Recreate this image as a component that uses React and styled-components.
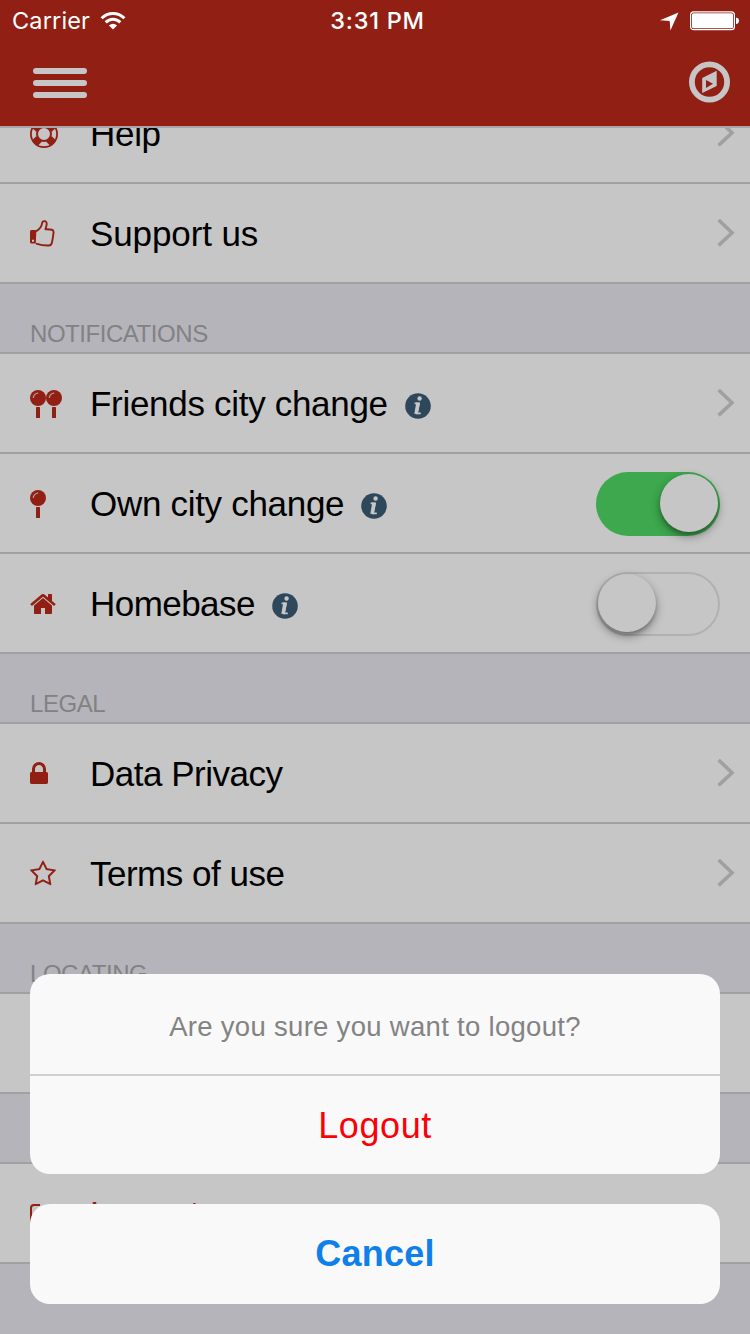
import React from "react";
import styled, { createGlobalStyle } from "styled-components";

const red = "#921f13";
const line = "#a1a1a2";
const surface = "#c6c6c6";
const backdrop = "#b5b4bb";

const GlobalStyle = createGlobalStyle`
  * { box-sizing: border-box; }
  body { margin: 0; background: ${backdrop}; }
  button { font: inherit; border: 0; padding: 0; background: none; }
  svg { display: block; flex: none; }
`;

const Screen = styled.div`
  position: relative;
  display: flex;
  flex-direction: column;
  width: 750px;
  height: 1334px;
  overflow: hidden;
  background: ${backdrop};
  font-family: "Liberation Sans", Arial, sans-serif;
  color: #000;
`;

const Header = styled.header`
  flex: none;
  height: 128px;
  background: ${red};
  border-bottom: 2px solid #a9a7a9;
`;

const StatusBar = styled.div`
  display: grid;
  grid-template-columns: 1fr auto 1fr;
  align-items: center;
  height: 40px;
  padding: 1px 11px 0 12px;
  color: #fff;
  font-family: Inter, "Liberation Sans", sans-serif;
  font-size: 24px;
  line-height: 40px;
`;

const StatusGroup = styled.div`
  display: flex;
  align-items: center;
  gap: ${(p) => p.$gap}px;
  justify-content: ${(p) => (p.$end ? "flex-end" : "flex-start")};
`;

const Carrier = styled.span`
  font-size: 23.5px;
  letter-spacing: 0.15px;
`;

const Clock = styled.span`
  margin-left: 4px;
  font-weight: 500;
  font-size: 23.5px;
  letter-spacing: 0.75px;
`;

const NavBar = styled.nav`
  display: flex;
  align-items: center;
  justify-content: space-between;
  height: 84px;
  padding: 0 20px 0 33px;
`;

const MenuButton = styled.button`
  display: flex;
  flex-direction: column;
  gap: 6px;
  width: 54px;
  margin-top: 2px;
`;

const MenuBar = styled.span`
  height: 6px;
  border-radius: 3px;
  background: ${surface};
`;

const Content = styled.main`
  flex: 1;
  min-height: 0;
  overflow: hidden;
`;

const List = styled.div`
  margin-top: -44px;
`;

const SectionTitle = styled.h2`
  display: flex;
  align-items: flex-end;
  height: 70px;
  margin: 0;
  padding: 0 30px 5px;
  border-bottom: 2px solid ${line};
  color: #828283;
  font-size: 24px;
  font-weight: 400;
  line-height: 27px;
  letter-spacing: -0.45px;
`;

const Row = styled.div`
  display: flex;
  align-items: center;
  height: 100px;
  padding: 0 ${(p) => (p.$toggle ? 30 : 15)}px 0 30px;
  background: ${surface};
  border-bottom: 2px solid ${line};
`;

const IconSlot = styled.span`
  display: flex;
  align-items: center;
  width: 60px;
  height: 40px;
  margin-top: 2px;
  color: ${red};
`;

const Label = styled.span`
  margin-top: 2px;
  color: ${(p) => p.$color ?? "#000"};
  font-size: 35px;
  line-height: 42px;
  white-space: nowrap;
  letter-spacing: ${(p) => p.$spacing ?? 0}px;
`;

const InfoSlot = styled.span`
  margin: 5px 0 0 17px;
`;

const Trailing = styled.span`
  margin-left: auto;
`;

const Gap = styled.div`
  height: 70px;
  border-bottom: 2px solid ${line};
`;

const SwitchTrack = styled.button`
  display: flex;
  justify-content: ${(p) => (p.$on ? "flex-end" : "flex-start")};
  width: 124px;
  height: 64px;
  margin-top: 2px;
  padding: ${(p) => (p.$on ? 2 : 0)}px;
  border: ${(p) => (p.$on ? "0" : "2px solid #b1b1b1")};
  border-radius: 32px;
  background: ${(p) => (p.$on ? "#3da84d" : surface)};
`;

const SwitchKnob = styled.span`
  width: 58px;
  height: 58px;
  border-radius: 50%;
  background: ${surface};
  box-shadow: 0 4px 10px rgba(0, 0, 0, 0.4), 0 3px 3px rgba(0, 0, 0, 0.12);
`;

const Sheet = styled.div`
  position: absolute;
  left: 30px;
  right: 30px;
  bottom: 30px;
  display: flex;
  flex-direction: column;
  gap: 30px;
`;

const SheetGroup = styled.div`
  display: flex;
  flex-direction: column;
  overflow: hidden;
  border-radius: 20px;
  background: #f9f9f9;
`;

const SheetTitle = styled.p`
  display: flex;
  align-items: center;
  justify-content: center;
  height: 102px;
  margin: 0;
  padding-top: 5px;
  border-bottom: 2px solid #d0d0d1;
  color: #838383;
  font-size: 27.5px;
  letter-spacing: 0.3px;
`;

const SheetButton = styled.button`
  height: ${(p) => (p.$cancel ? 100 : 98)}px;
  padding-top: ${(p) => (p.$cancel ? 0 : 2)}px;
  color: ${(p) => (p.$cancel ? "#0f80ea" : "#fb0007")};
  font-size: 36px;
  font-weight: ${(p) => (p.$cancel ? 700 : 400)};
  letter-spacing: ${(p) => (p.$cancel ? 0.2 : 0.6)}px;
`;

const WifiIcon = () => (
  <svg width="26" height="20" viewBox="0 0 26 20" fill="none" stroke="#fff" strokeWidth="3">
    <path d="M1.6 7.3C8 .9 18 .9 24.4 7.3" />
    <path d="M5.7 11.4C9.9 7.2 16.1 7.2 20.3 11.4" />
    <path d="M13 18.6 8.9 14.5Q13 11 17.1 14.5Z" fill="#fff" stroke="none" />
  </svg>
);

const LocationIcon = () => (
  <svg width="19" height="19" viewBox="0 0 19 19" fill="#fff">
    <path d="M18.5.4 0 8.2l9.7.9.7 9.4Z" />
  </svg>
);

const BatteryIcon = () => (
  <svg width="49" height="20" viewBox="0 0 49 20">
    <rect x=".6" y=".9" width="43.8" height="17.8" rx="3" fill="none" stroke="#fff" strokeWidth="1.2" />
    <rect x="2" y="2.3" width="41" height="15" rx="1.6" fill="#fff" />
    <path d="M46 6.5q3 .5 3 3.3T46 13.1Z" fill="#fff" />
  </svg>
);

const CompassIcon = () => (
  <svg width="41" height="42" viewBox="0 0 41 42">
    <circle cx="20.5" cy="21" r="17.6" fill="none" stroke={surface} strokeWidth="5.8" />
    <path fill={surface} fillRule="evenodd" d="M13.2 17 27.7 9.8V25L13.2 32ZM17 19V27L24 22.8Z" />
  </svg>
);

const LifeRingIcon = () => (
  <svg width="28" height="28" viewBox="0 0 28 28" fill="none" stroke="currentColor">
    <circle cx="14" cy="14" r="13.1" strokeWidth="1.8" />
    <circle cx="14" cy="14" r="7" strokeWidth="2" />
    <g strokeWidth="8">
      <path d="m5 5 4 4M19 19l4 4M23 5l-4 4M9 19l-4 4" />
    </g>
  </svg>
);

const ThumbIcon = () => (
  <svg width="25" height="28" viewBox="0 0 25 28" fill="none">
    <path d="M6 11.4C9.5 9.2 11.5 7.5 12 3.6 12.4 1.2 13.8.9 15.1 1.2c2.4.7 1.8 3.8.3 8 1.7.1 4.2.1 6.5.5 1.6.3 1.8 1.4 1.6 3.1-.3 2.8-.9 7-1.6 9.9-.5 2-1.5 2.8-3.2 2.8-4.7.1-8.5-.6-12.7-1.9" stroke="currentColor" strokeWidth="1.9" strokeLinejoin="round" />
    <path fill="currentColor" fillRule="evenodd" d="M1.5 10H5q1.6 0 1.3 1.6L5.8 23.5H1.5Q0 23.5 0 22V11.5Q0 10 1.5 10ZM2 19.7v2h2v-2Z" />
  </svg>
);

const Pin = ({ x }) => (
  <g transform={`translate(${x} 0)`}>
    <circle cx="8" cy="8" r="8" fill="currentColor" />
    <path d="M3.3 7.5Q4 3.8 7.8 3" fill="none" stroke={surface} strokeWidth="1.2" strokeLinecap="round" opacity=".85" />
    <rect x="6" y="17" width="4" height="11" rx=".5" fill="currentColor" />
  </g>
);

const PinIcon = ({ count = 1 }) => (
  <svg width={16 * count} height="28" viewBox={`0 0 ${16 * count} 28`}>
    <Pin x={0} />
    {count > 1 && <Pin x={16} />}
  </svg>
);

const HomeIcon = () => (
  <svg width="26" height="28" viewBox="64 0 1664 1792" fill="currentColor">
    <path d="M1472 992v480q0 26-19 45t-45 19h-384v-384h-256v384h-384q-26 0-45-19t-19-45v-480q0-1 .5-3t.5-3l575-474 575 474q1 2 1 6zm223-69l-62 74q-8 9-21 11h-3q-13 0-21-7l-692-577-692 577q-12 8-24 7-13-2-21-11l-62-74q-8-10-7-23.5t11-21.5l719-599q32-26 76-26t76 26l244 204v-195q0-14 9-23t23-9h192q14 0 23 9t9 23v408l219 182q10 8 11 21.5t-7 23.5z" />
  </svg>
);

const LockIcon = () => (
  <svg width="18" height="28" viewBox="320 0 1152 1792" fill="currentColor">
    <path d="M640 768h512v-192q0-106-75-181t-181-75-181 75-75 181v192zm832 96v576q0 40-28 68t-68 28h-960q-40 0-68-28t-28-68v-576q0-40 28-68t68-28h32v-192q0-184 132-316t316-132 316 132 132 316v192h32q40 0 68 28t28 68z" />
  </svg>
);

const StarIcon = () => (
  <svg width="26" height="28" viewBox="64 0 1664 1792" fill="currentColor">
    <path d="M1201 1004l306-297-422-62-189-382-189 382-422 62 306 297-73 421 378-199 377 199zm527-357q0 22-26 48l-363 354 86 500q1 7 1 20 0 50-41 50-19 0-40-12l-449-236-449 236q-22 12-40 12-21 0-31.5-14.5t-10.5-35.5q0-6 2-20l86-500-364-354q-25-27-25-48 0-37 56-46l502-73 225-455q19-41 49-41t49 41l225 455 502 73q56 9 56 46z" />
  </svg>
);

const SignOutIcon = () => (
  <svg width="26" height="20" viewBox="0 0 26 20" fill="none" stroke="currentColor" strokeWidth="2">
    <path d="M10 1H4Q1 1 1 4v12q0 3 3 3h6M9 7h7V3l8 7-8 7v-4H9Z" />
  </svg>
);

const InfoIcon = () => (
  <svg width="26" height="26" viewBox="0 0 26 26">
    <circle cx="13" cy="13" r="12.8" fill="#2e475b" />
    <circle cx="14.6" cy="5.5" r="2.2" fill={surface} />
    <path d="M9.6 10.3h4.5l-2.2 10h3.9" fill="none" stroke={surface} strokeWidth="1.7" />
    <path d="M13.1 9.6 11.1 21" stroke={surface} strokeWidth="3.6" />
  </svg>
);

const ChevronIcon = () => (
  <svg width="18" height="28" viewBox="0 0 18 28" fill="none" stroke="#a0a0a1" strokeWidth="3.6">
    <path d="M1.6 1 15 13.7 1.6 26.4" />
  </svg>
);

const Switch = ({ on }) => (
  <SwitchTrack $on={on} role="switch" aria-checked={on}>
    <SwitchKnob />
  </SwitchTrack>
);

const SettingRow = ({ icon, label, spacing, info, toggle, color, chevron = true }) => (
  <Row $toggle={toggle !== undefined}>
    <IconSlot>{icon}</IconSlot>
    <Label $spacing={spacing} $color={color}>{label}</Label>
    {info && <InfoSlot><InfoIcon /></InfoSlot>}
    <Trailing>
      {toggle !== undefined ? <Switch on={toggle} /> : chevron && <ChevronIcon />}
    </Trailing>
  </Row>
);

export default function App() {
  return (
    <Screen>
      <GlobalStyle />
      <Header>
        <StatusBar>
          <StatusGroup $gap={10}>
            <Carrier>Carrier</Carrier>
            <WifiIcon />
          </StatusGroup>
          <Clock>3:31 PM</Clock>
          <StatusGroup $gap={11} $end>
            <LocationIcon />
            <BatteryIcon />
          </StatusGroup>
        </StatusBar>
        <NavBar>
          <MenuButton aria-label="Menu">
            <MenuBar />
            <MenuBar />
            <MenuBar />
          </MenuButton>
          <CompassIcon />
        </NavBar>
      </Header>
      <Content>
        <List>
          <SettingRow icon={<LifeRingIcon />} label="Help" spacing={-0.3} />
          <SettingRow icon={<ThumbIcon />} label="Support us" spacing={-0.1} />
          <SectionTitle>NOTIFICATIONS</SectionTitle>
          <SettingRow icon={<PinIcon count={2} />} label="Friends city change" spacing={-0.3} info />
          <SettingRow icon={<PinIcon />} label="Own city change" spacing={-0.3} info toggle={true} />
          <SettingRow icon={<HomeIcon />} label="Homebase" spacing={-0.55} info toggle={false} />
          <SectionTitle>LEGAL</SectionTitle>
          <SettingRow icon={<LockIcon />} label="Data Privacy" spacing={-0.5} />
          <SettingRow icon={<StarIcon />} label="Terms of use" spacing={-0.5} />
          <SectionTitle>LOCATING</SectionTitle>
          <SettingRow chevron={false} />
          <Gap />
          <SettingRow icon={<SignOutIcon />} label="Logout" spacing={0.5} color={red} chevron={false} />
        </List>
      </Content>
      <Sheet role="dialog">
        <SheetGroup>
          <SheetTitle>Are you sure you want to logout?</SheetTitle>
          <SheetButton>Logout</SheetButton>
        </SheetGroup>
        <SheetGroup>
          <SheetButton $cancel>Cancel</SheetButton>
        </SheetGroup>
      </Sheet>
    </Screen>
  );
}
